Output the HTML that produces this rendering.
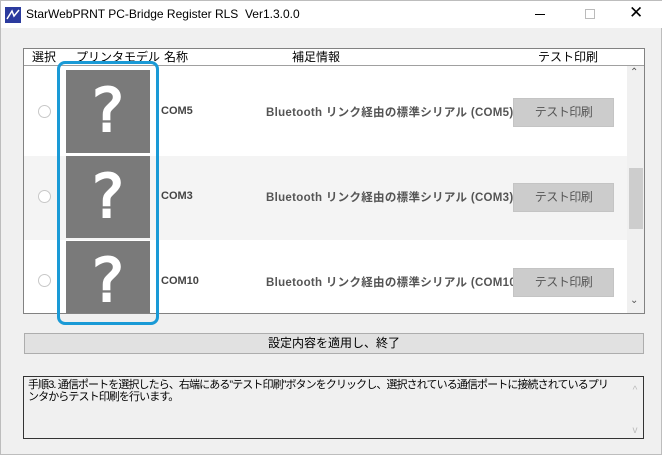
<!DOCTYPE html>
<html><head><meta charset="utf-8"><style>
*{margin:0;padding:0;box-sizing:border-box}
body{width:662px;height:455px;background:#f0f0f0;font-family:"Liberation Sans","Noto Sans CJK JP",sans-serif;font-size:12px;color:#000;position:relative;overflow:hidden;border:1px solid #bdbdbd}
.abs{position:absolute}
.title{left:0;top:0;width:662px;height:27px;background:#fff}
.list{left:22px;top:47px;width:622px;height:266px;background:#fff;border:1px solid #828282;overflow:hidden}
.hdr{left:0;top:0;width:620px;height:17px;border-bottom:1px solid #a0a0a0;background:#fff;font-size:12px;line-height:16px}
.row{left:0;width:603px}
.radio{width:13px;height:13px;border:1px solid #c8c8c8;border-radius:50%;background:#fff;left:14px}
.img{left:42px;width:84px;background:#7a7a7a;color:#fff;font-size:60px;-webkit-text-stroke:2px #fff;text-align:center;font-family:"DejaVu Sans",sans-serif;overflow:hidden}
.com{left:137px;font-weight:bold;color:#444;font-size:11px}
.bt{left:242px;font-weight:bold;color:#555;font-size:11.5px;letter-spacing:0.3px;white-space:nowrap;width:247px;overflow:hidden}
.tb{left:489px;width:101px;height:29px;background:#cccccc;border:1px solid #c4c4c4;color:#555;text-align:center;line-height:27px;font-size:12px;letter-spacing:-0.5px}
</style></head><body>
<div class="abs title">
<svg class="abs" style="left:4px;top:6px" width="16" height="16"><rect width="16" height="16" fill="#2b3b9e"/><path d="M2 12 L7 4 L9 9 L14 3" stroke="#fff" stroke-width="1.5" fill="none"/></svg>
<div class="abs" style="left:25px;top:6px;font-size:12px">StarWebPRNT PC-Bridge Register RLS&nbsp; Ver1.3.0.0</div>
<div class="abs" style="left:534px;top:13px;width:10px;height:1px;background:#000"></div>
<div class="abs" style="left:584px;top:8px;width:10px;height:10px;border:1px solid #bbb"></div>
<div class="abs" style="left:628px;top:2px;font-size:17px;font-family:'DejaVu Sans';font-weight:200">✕</div>
</div>
<div class="abs list">
<div class="abs hdr"><span class="abs" style="left:8px">選択</span><span class="abs" style="left:52px">プリンタモデル</span><span class="abs" style="left:140px">名称</span><span class="abs" style="left:268px">補足情報</span><span class="abs" style="left:514px">テスト印刷</span></div>
<div class="abs row" style="top:17px;height:90px;background:#fff"></div>
<div class="abs row" style="top:107px;height:84px;background:#f4f4f4"></div>
<div class="abs row" style="top:191px;height:80px;background:#fff"></div>
<div class="abs radio" style="top:56px"></div><div class="abs radio" style="top:141px"></div><div class="abs radio" style="top:225px"></div>
<div class="abs img" style="top:21px;height:83px;line-height:83px">?</div>
<div class="abs img" style="top:107px;height:82px;line-height:82px">?</div>
<div class="abs img" style="top:192px;height:80px;line-height:80px">?</div>
<div class="abs com" style="top:56px">COM5</div><div class="abs com" style="top:141px">COM3</div><div class="abs com" style="top:226px">COM10</div>
<div class="abs bt" style="top:55px">Bluetooth リンク経由の標準シリアル (COM5)</div>
<div class="abs bt" style="top:140px">Bluetooth リンク経由の標準シリアル (COM3)</div>
<div class="abs bt" style="top:225px">Bluetooth リンク経由の標準シリアル (COM10)</div>
<div class="abs tb" style="top:49px">テスト印刷</div><div class="abs tb" style="top:134px">テスト印刷</div><div class="abs tb" style="top:219px">テスト印刷</div>
<div class="abs" style="left:603px;top:17px;width:17px;height:248px;background:#f0f0f0"></div>
<div class="abs" style="left:605px;top:119px;width:14px;height:61px;background:#cdcdcd"></div>
<div class="abs" style="left:606px;top:18px;font-size:10px;color:#555">⌃</div>
<div class="abs" style="left:606px;top:246px;font-size:10px;color:#555">⌄</div>
</div>
<div class="abs" style="left:56px;top:60px;width:102px;height:264px;border:3px solid #1a9ad6;border-radius:8px"></div>
<div class="abs" style="left:23px;top:332px;width:620px;height:21px;background:#e1e1e1;border:1px solid #adadad;text-align:center;line-height:19px">設定内容を適用し、終了</div>
<div class="abs" style="left:22px;top:375px;width:621px;height:63px;background:#f0f0f0;border:1px solid #333;font-size:11px;line-height:12px;padding:2px 28px 0 4px;letter-spacing:-0.9px">手順3. 通信ポートを選択したら、右端にある”テスト印刷”ボタンをクリックし、選択されている通信ポートに接続されているプリンタからテスト印刷を行います。
<div class="abs" style="left:603px;top:0;width:16px;height:61px;background:#f0f0f0;color:#bbb;font-size:10px;text-align:center;letter-spacing:0"><div style="margin-top:8px">^</div><div style="margin-top:28px">v</div></div></div>
</body></html>
